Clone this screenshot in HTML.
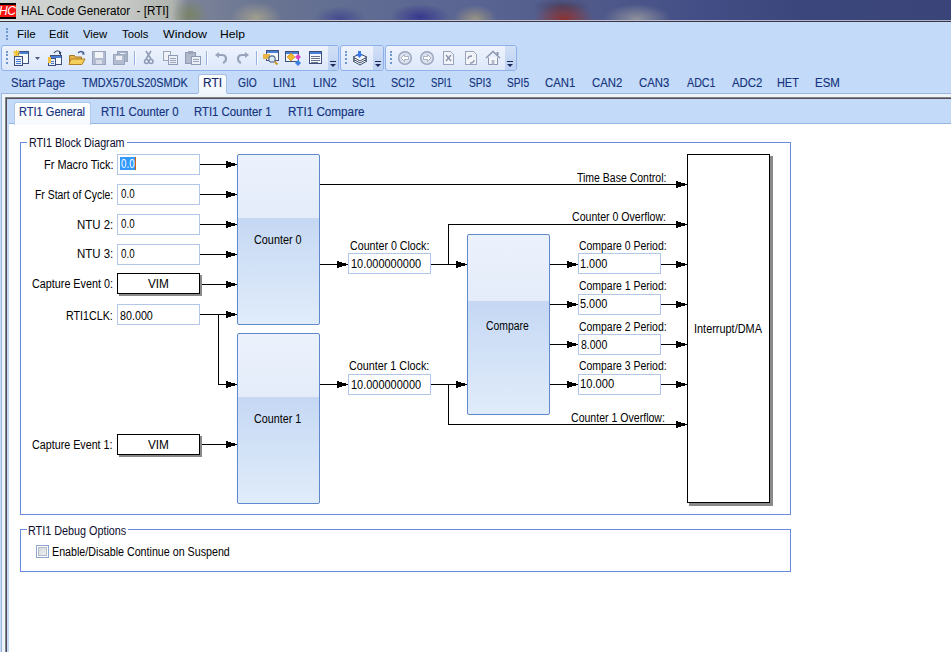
<!DOCTYPE html>
<html><head><meta charset="utf-8">
<style>
*{margin:0;padding:0;box-sizing:border-box}
html,body{width:951px;height:652px;overflow:hidden;background:#fff;font-family:"Liberation Sans",sans-serif}
.a{position:absolute}
.t{position:absolute;white-space:nowrap;transform-origin:0 0}
#title{left:0;top:0;width:951px;height:20px;
 background:
  radial-gradient(ellipse 18px 16px at 190px 15px, rgba(120,130,80,.7), rgba(120,130,80,0)),
  radial-gradient(ellipse 26px 16px at 256px 18px, rgba(190,180,140,.65), rgba(190,180,140,0)),
  radial-gradient(ellipse 26px 13px at 340px 19px, rgba(45,45,140,.55), rgba(45,45,140,0)),
  radial-gradient(ellipse 30px 13px at 420px 17px, rgba(40,36,140,.7), rgba(40,36,140,0)),
  radial-gradient(ellipse 22px 15px at 475px 20px, rgba(175,165,125,.75), rgba(175,165,125,0)),
  radial-gradient(ellipse 30px 16px at 564px 19px, rgba(145,45,38,.9), rgba(145,45,38,0)),
  radial-gradient(ellipse 30px 10px at 562px 7px, rgba(60,40,60,.5), rgba(60,40,60,0)),
  radial-gradient(ellipse 34px 15px at 637px 19px, rgba(170,170,165,.7), rgba(170,170,165,0)),
  linear-gradient(90deg,#d2d6d4 0px,#c8cbc8 120px,#b0b4ae 172px,#7c8498 188px,#6a7592 260px,#606c92 360px,#596492 480px,#4f598a 600px,#434e86 700px,#3b467c 800px,#3a4478 951px);}
#bar{left:0;top:22px;width:951px;height:630px;background:#c3dbf8}
.grip{width:2px;height:2px;background:#7196cc;position:absolute}
.tb{position:absolute;top:45px;height:26px;border:1px solid #8fb0ea;border-radius:3px;
 background:linear-gradient(#eef3fd,#e6eefc 45%,#dde8fb 100%)}
.ov{position:absolute;top:46px;height:24px;background:linear-gradient(#d2e0f6,#bcd0f2);border-radius:0 2px 2px 0}
.ova{position:absolute;width:0;height:0;border-left:3px solid transparent;border-right:3px solid transparent;border-top:3px solid #1a2a5a}
.ovl{position:absolute;width:6px;height:1px;background:#1a2a5a}
.sep{position:absolute;top:51px;width:1px;height:14px;background:#95b1e0;box-shadow:1px 0 0 #fff}
.gb{position:absolute;border:1px solid #6a8ade}
.tx{position:absolute;border:1px solid #b2c6e8;background:#fff;width:83px;height:21px}
.vim{position:absolute;background:#000}
.blk{position:absolute;border:1px solid #6088cc;border-radius:2px;width:83px;
 background:linear-gradient(#ecf2fc 0%,#e4ecfa 37%,#c6d7f4 37%,#cedff6 58%,#e0ecfa 100%)}
.ln{position:absolute;background:#000}
</style></head><body>
<div id="title" class="a"></div>
<div class="a" style="left:0;top:20px;width:951px;height:1px;background:linear-gradient(90deg,#e2e6e6,#c8ccd8 300px,#a8b2cc 951px)"></div>
<div class="a" style="left:0;top:21px;width:951px;height:1px;background:#3b3546"></div>
<!-- HC icon -->
<div class="a" style="left:0;top:3px;width:16px;height:16px;background:#000"></div>
<div class="a" style="left:0;top:5px;width:16px;height:12px;background:#f41414"></div>
<div class="a" style="left:-1px;top:4px;font-size:12px;line-height:14px;font-style:italic;color:#fff;letter-spacing:-0.5px;font-family:'Liberation Sans'">HC</div>

<div id="bar" class="a"></div>
<div class="grip" style="left:6px;top:28px"></div>
<div class="grip" style="left:6px;top:31px"></div>
<div class="grip" style="left:6px;top:35px"></div>
<div class="grip" style="left:6px;top:38px"></div>

<!-- toolbars -->
<div class="tb" style="left:1px;width:338px"></div>
<div class="ov" style="left:328px;width:10px"></div>
<div class="tb" style="left:340px;width:44px"></div>
<div class="ov" style="left:373px;width:10px"></div>
<div class="tb" style="left:385px;width:132px"></div>
<div class="ov" style="left:505px;width:11px"></div>
<div class="ovl" style="left:330px;top:61px"></div><div class="ova" style="left:330px;top:64px"></div>
<div class="ovl" style="left:375px;top:61px"></div><div class="ova" style="left:375px;top:64px"></div>
<div class="ovl" style="left:507px;top:61px"></div><div class="ova" style="left:507px;top:64px"></div>
<div class="grip" style="left:6px;top:51px"></div><div class="grip" style="left:6px;top:54px"></div><div class="grip" style="left:6px;top:58px"></div><div class="grip" style="left:6px;top:62px"></div>
<div class="grip" style="left:345px;top:51px"></div><div class="grip" style="left:345px;top:54px"></div><div class="grip" style="left:345px;top:58px"></div><div class="grip" style="left:345px;top:62px"></div>
<div class="grip" style="left:390px;top:51px"></div><div class="grip" style="left:390px;top:54px"></div><div class="grip" style="left:390px;top:58px"></div><div class="grip" style="left:390px;top:62px"></div>
<div class="sep" style="left:134px"></div>
<div class="sep" style="left:206px"></div>
<div class="sep" style="left:256px"></div>
<svg class="a" style="left:0;top:0" width="520" height="72" viewBox="0 0 520 72" shape-rendering="crispEdges">
<!-- 1 new project -->
<g>
 <rect x="18.5" y="51.5" width="10" height="12" fill="#f4f7fc" stroke="#3d4f7a"/>
 <rect x="19" y="52" width="9" height="2" fill="#4a7fd8"/>
 <path d="M13 53h7M16.5 50v7M14 51l5 5M19 51l-5 5" stroke="#f2c020" stroke-width="1.2" fill="none" shape-rendering="auto"/>
 <rect x="14.5" y="56.5" width="8" height="9" fill="#e8eef8" stroke="#3d4f7a"/>
 <path d="M16 59h5M16 61h5M16 63h5" stroke="#4a78d0"/>
</g>
<path d="M35 57h5l-2.5 3z" fill="#4a5a80" shape-rendering="auto"/>
<!-- 2 open project -->
<g>
 <rect x="50.5" y="55.5" width="11" height="9" fill="#f4f7fc" stroke="#3d4f7a"/>
 <rect x="51" y="56" width="10" height="2" fill="#4a7fd8"/>
 <path d="M54 53c2-3 5-3 7 0" stroke="#2d3f6a" stroke-width="1.2" fill="none" shape-rendering="auto"/>
 <path d="M59 52l3 2-2 1z" fill="#2d3f6a"/>
 <rect x="48.5" y="58.5" width="7" height="7" fill="#e8eef8" stroke="#3d4f7a"/>
 <rect x="47.5" y="57" width="3" height="6" fill="#f0c040"/>
 <path d="M51 61h3M51 63h3" stroke="#4a78d0"/>
</g>
<!-- 3 folder -->
<g shape-rendering="auto">
 <path d="M69.5 55.5h5l1 1.5h6v7.5h-12z" fill="#e8b448" stroke="#a0782a"/>
 <path d="M71 59h14l-3 5.5h-13z" fill="#f6cf5a" stroke="#b08028"/>
 <path d="M78 53c2-2 4-2 6 0" stroke="#3d5a8a" stroke-width="1.2" fill="none"/>
 <path d="M83 51.5l2 3-3 0z" fill="#3d5a8a"/>
</g>
<!-- 4 save (disabled) -->
<g>
 <rect x="92.5" y="51.5" width="13" height="13" fill="#b2bcd0" stroke="#98a4bc"/>
 <rect x="95" y="52" width="8" height="6" fill="#f2f4f8"/>
 <rect x="96" y="60" width="6" height="4" fill="#d8dce6"/>
</g>
<!-- 5 save all -->
<g>
 <rect x="117.5" y="51.5" width="10" height="10" fill="#aab4c8" stroke="#98a4bc"/><path d="M120 53h5" stroke="#eef2f8"/>
 <rect x="113.5" y="54.5" width="11" height="10" fill="#b2bcd0" stroke="#98a4bc"/>
 <rect x="116" y="56" width="6" height="4" fill="#eef0f6"/>
</g>
<!-- 6 cut -->
<g shape-rendering="auto" fill="none" stroke="#8f9ab4" stroke-width="1.5">
 <path d="M146 51l5 8M151 51l-5 8"/>
 <circle cx="146.5" cy="61.5" r="2"/><circle cx="151" cy="61.5" r="2"/>
</g>
<!-- 7 copy -->
<g>
 <rect x="163.5" y="51.5" width="7" height="9" fill="#f0f2f6" stroke="#9aa4ba"/>
 <rect x="168.5" y="55.5" width="9" height="9" fill="#eceff5" stroke="#8f9ab4"/>
 <path d="M170 58h6M170 60h6M170 62h6" stroke="#9aa4ba"/>
</g>
<!-- 8 paste -->
<g>
 <rect x="185.5" y="52.5" width="10" height="11" fill="#b0b8ca" stroke="#8f9ab4"/>
 <rect x="188" y="51" width="5" height="3" fill="#9aa4ba"/>
 <rect x="191.5" y="56.5" width="9" height="8" fill="#eceff5" stroke="#8f9ab4"/>
 <path d="M193 59h6M193 61h6" stroke="#9aa4ba"/>
</g>
<!-- 9 undo / redo -->
<g shape-rendering="auto" fill="none" stroke="#98a4bc" stroke-width="2.2">
 <path d="M217 55h5c3 0 4 2 4 4s-1 3-3 4"/>
 <path d="M247 55h-5c-3 0-4 2-4 4s1 3 3 4"/>
</g>
<path d="M215 55l4-3v6z" fill="#98a4bc" shape-rendering="auto"/>
<path d="M249 55l-4-3v6z" fill="#98a4bc" shape-rendering="auto"/>
<!-- 10 find -->
<g>
 <rect x="266.5" y="50.5" width="12" height="10" fill="#f4f7fc" stroke="#3d4f7a"/>
 <rect x="267" y="51" width="11" height="2" fill="#4a7fd8"/>
 <rect x="263" y="54" width="7" height="5" fill="#e8b448"/>
 <g shape-rendering="auto"><circle cx="272" cy="59" r="3.2" fill="#d8ecf8" stroke="#5a6a88" stroke-width="1.2"/>
 <path d="M274.5 61.5l3 3" stroke="#c89830" stroke-width="2"/></g>
</g>
<!-- 11 -->
<g>
 <rect x="285.5" y="51.5" width="13" height="10" fill="#f4f7fc" stroke="#3d4f7a"/>
 <rect x="286" y="52" width="12" height="2" fill="#4a7fd8"/>
 <g shape-rendering="auto">
 <path d="M287 57l4-4 4 4-4 4z" fill="#f0b830" stroke="#c08820" stroke-width=".6"/>
 <path d="M295 57l3-3 3 3-3 3z" fill="#e040c8"/>
 <path d="M295 63l3-3 3 3-3 3z" fill="#3a80e0"/>
 </g>
</g>
<!-- 12 list window -->
<g>
 <rect x="309.5" y="51.5" width="12" height="12" fill="#f4f7fc" stroke="#3d4f7a"/>
 <rect x="310" y="52" width="11" height="2" fill="#4a7fd8"/>
 <path d="M311 56h9M311 58h9M311 60h9M311 62h7" stroke="#6a7488"/>
</g>
<!-- 13 stack -->
<g shape-rendering="auto">
 <path d="M353 61l7-3 7 3-7 4z" fill="#fff" stroke="#3d4f6a"/>
 <path d="M353 59l7-3 7 3-7 4z" fill="#fff" stroke="#3d4f6a"/>
 <path d="M353 57l7-3 7 3-7 4z" fill="#f4f6fa" stroke="#3d4f6a"/>
 <path d="M358 51h3v3h2l-3.5 4-3.5-4h2z" fill="#3a7ae8"/>
</g>
<!-- 14 circle left / right -->
<g shape-rendering="auto">
 <circle cx="405" cy="58" r="6.3" fill="#dde3ee" stroke="#9aa4bc" stroke-width="1.4"/>
 <path d="M401 58l3.5-3.5v2h4v3h-4v2z" fill="#fff" stroke="#9aa4bc" stroke-width=".8"/>
 <circle cx="427" cy="58" r="6.3" fill="#dde3ee" stroke="#9aa4bc" stroke-width="1.4"/>
 <path d="M431 58l-3.5-3.5v2h-4v3h4v2z" fill="#fff" stroke="#9aa4bc" stroke-width=".8"/>
</g>
<!-- 15 doc x -->
<g>
 <path d="M443.5 51.5h7l3 3v10h-10z" fill="#f2f4f8" stroke="#9aa4bc"/>
 <path d="M446 55l5 6M451 55l-5 6" stroke="#8a94ac" stroke-width="1.4" shape-rendering="auto"/>
</g>
<!-- 16 doc refresh -->
<g>
 <path d="M465.5 51.5h8l3 3v10h-11z" fill="#f2f4f8" stroke="#9aa4bc"/>
 <path d="M468 59c0-2 2-3 4-3M474 60c0 2-2 3-4 3" stroke="#8a94ac" stroke-width="1.3" fill="none" shape-rendering="auto"/>
</g>
<!-- 17 home -->
<g shape-rendering="auto">
 <path d="M486 58l7-6.5 7 6.5" fill="none" stroke="#8a94ac" stroke-width="1.4"/>
 <path d="M488.5 57.5v7h9v-7" fill="#f4f6fa" stroke="#8a94ac"/>
 <rect x="491.5" y="60" width="3" height="4.5" fill="#b4bccc"/>
 <rect x="496.5" y="52" width="2" height="3" fill="#8a94ac"/>
</g>
</svg>


<!-- doc tab selected -->
<div class="a" style="left:198px;top:74px;width:29px;height:22px;background:linear-gradient(#fbfdff,#eef4fc);border:1px solid #a8c0e0;border-bottom:none;border-radius:3px 3px 0 0"></div>

<!-- content frame -->
<div class="a" style="left:1px;top:93px;width:950px;height:559px;background:#9cb6dc"></div>
<div class="a" style="left:2px;top:94px;width:949px;height:558px;background:#eef4fc"></div>
<div class="a" style="left:198px;top:93px;width:29px;height:4px;background:#eef4fc"></div>
<div class="a" style="left:5px;top:97px;width:946px;height:555px;background:#7d877f"></div>
<div class="a" style="left:6px;top:98px;width:945px;height:554px;background:#584a5a"></div>
<div class="a" style="left:7px;top:99px;width:944px;height:553px;background:#c3dbf8"></div>
<div class="a" style="left:9px;top:123px;width:942px;height:1px;background:#98b6e2"></div>
<div class="a" style="left:9px;top:124px;width:942px;height:528px;background:#fff"></div>
<div class="a" style="left:14px;top:102px;width:77px;height:23px;background:linear-gradient(#ffffff,#f6f9fe);border:1px solid #b0c8ea;border-bottom:none;border-radius:3px 3px 0 0"></div>

<!-- group boxes -->
<div class="gb" style="left:20px;top:142px;width:771px;height:373px"></div>
<div class="a" style="left:27px;top:140px;width:100px;height:4px;background:#fff"></div>
<div class="gb" style="left:20px;top:529px;width:771px;height:43px"></div>
<div class="a" style="left:27px;top:527px;width:101px;height:4px;background:#fff"></div>
<!-- checkbox -->
<div class="a" style="left:36px;top:545px;width:13px;height:13px;border:1px solid #8fa4d0;background:#fff"></div>
<div class="a" style="left:38px;top:547px;width:9px;height:9px;border:1px solid #b4bcc8;background:linear-gradient(135deg,#d4d8d8,#eef0f2)"></div>

<div class="tx" style="left:117px;top:154px;"></div>
<div class="tx" style="left:117px;top:184px;"></div>
<div class="tx" style="left:117px;top:214px;"></div>
<div class="tx" style="left:117px;top:244px;"></div>
<div class="tx" style="left:117px;top:304px;"></div>
<div class="a" style="left:119px;top:275px;width:83px;height:21px;background:#8a8a8a"></div>
<div class="a" style="left:117px;top:273px;width:83px;height:21px;background:#000"></div>
<div class="a" style="left:118px;top:274px;width:81px;height:19px;background:#fff"></div>
<div class="a" style="left:119px;top:436px;width:83px;height:21px;background:#8a8a8a"></div>
<div class="a" style="left:117px;top:434px;width:83px;height:21px;background:#000"></div>
<div class="a" style="left:118px;top:435px;width:81px;height:19px;background:#fff"></div>
<div class="a" style="left:120px;top:157px;width:15px;height:13px;background:#3399ff"></div>
<div class="a" style="left:135px;top:157px;width:1px;height:13px;background:#d06010"></div>
<div class="blk" style="left:237px;top:154px;height:171px;"></div>
<div class="blk" style="left:237px;top:333px;height:171px;"></div>
<div class="blk" style="left:467px;top:234px;height:181px;"></div>
<div class="tx" style="left:348px;top:253px;"></div>
<div class="tx" style="left:348px;top:374px;"></div>
<div class="tx" style="left:578px;top:253px;"></div>
<div class="tx" style="left:578px;top:294px;"></div>
<div class="tx" style="left:578px;top:334px;"></div>
<div class="tx" style="left:578px;top:374px;"></div>
<div class="a" style="left:689px;top:156px;width:84px;height:350px;background:#8a8a8a"></div>
<div class="a" style="left:687px;top:154px;width:83px;height:349px;background:#000"></div>
<div class="a" style="left:688px;top:155px;width:81px;height:347px;background:#fff"></div>
<div class="ln" style="left:200px;top:164px;width:37px;height:1px;"></div>
<div class="ln" style="left:226px;top:161px;width:2px;height:7px;"></div>
<div class="ln" style="left:228px;top:162px;width:3px;height:5px;"></div>
<div class="ln" style="left:231px;top:163px;width:4px;height:3px;"></div>
<div class="ln" style="left:200px;top:194px;width:37px;height:1px;"></div>
<div class="ln" style="left:226px;top:191px;width:2px;height:7px;"></div>
<div class="ln" style="left:228px;top:192px;width:3px;height:5px;"></div>
<div class="ln" style="left:231px;top:193px;width:4px;height:3px;"></div>
<div class="ln" style="left:200px;top:224px;width:37px;height:1px;"></div>
<div class="ln" style="left:226px;top:221px;width:2px;height:7px;"></div>
<div class="ln" style="left:228px;top:222px;width:3px;height:5px;"></div>
<div class="ln" style="left:231px;top:223px;width:4px;height:3px;"></div>
<div class="ln" style="left:200px;top:254px;width:37px;height:1px;"></div>
<div class="ln" style="left:226px;top:251px;width:2px;height:7px;"></div>
<div class="ln" style="left:228px;top:252px;width:3px;height:5px;"></div>
<div class="ln" style="left:231px;top:253px;width:4px;height:3px;"></div>
<div class="ln" style="left:202px;top:284px;width:35px;height:1px;"></div>
<div class="ln" style="left:226px;top:281px;width:2px;height:7px;"></div>
<div class="ln" style="left:228px;top:282px;width:3px;height:5px;"></div>
<div class="ln" style="left:231px;top:283px;width:4px;height:3px;"></div>
<div class="ln" style="left:200px;top:314px;width:37px;height:1px;"></div>
<div class="ln" style="left:226px;top:311px;width:2px;height:7px;"></div>
<div class="ln" style="left:228px;top:312px;width:3px;height:5px;"></div>
<div class="ln" style="left:231px;top:313px;width:4px;height:3px;"></div>
<div class="ln" style="left:218px;top:314px;width:1px;height:71px;"></div>
<div class="ln" style="left:218px;top:384px;width:19px;height:1px;"></div>
<div class="ln" style="left:226px;top:381px;width:2px;height:7px;"></div>
<div class="ln" style="left:228px;top:382px;width:3px;height:5px;"></div>
<div class="ln" style="left:231px;top:383px;width:4px;height:3px;"></div>
<div class="ln" style="left:202px;top:444px;width:35px;height:1px;"></div>
<div class="ln" style="left:226px;top:441px;width:2px;height:7px;"></div>
<div class="ln" style="left:228px;top:442px;width:3px;height:5px;"></div>
<div class="ln" style="left:231px;top:443px;width:4px;height:3px;"></div>
<div class="ln" style="left:320px;top:184px;width:367px;height:1px;"></div>
<div class="ln" style="left:676px;top:181px;width:2px;height:7px;"></div>
<div class="ln" style="left:678px;top:182px;width:3px;height:5px;"></div>
<div class="ln" style="left:681px;top:183px;width:4px;height:3px;"></div>
<div class="ln" style="left:320px;top:264px;width:28px;height:1px;"></div>
<div class="ln" style="left:337px;top:261px;width:2px;height:7px;"></div>
<div class="ln" style="left:339px;top:262px;width:3px;height:5px;"></div>
<div class="ln" style="left:342px;top:263px;width:4px;height:3px;"></div>
<div class="ln" style="left:431px;top:264px;width:36px;height:1px;"></div>
<div class="ln" style="left:456px;top:261px;width:2px;height:7px;"></div>
<div class="ln" style="left:458px;top:262px;width:3px;height:5px;"></div>
<div class="ln" style="left:461px;top:263px;width:4px;height:3px;"></div>
<div class="ln" style="left:448px;top:224px;width:1px;height:41px;"></div>
<div class="ln" style="left:448px;top:224px;width:239px;height:1px;"></div>
<div class="ln" style="left:676px;top:221px;width:2px;height:7px;"></div>
<div class="ln" style="left:678px;top:222px;width:3px;height:5px;"></div>
<div class="ln" style="left:681px;top:223px;width:4px;height:3px;"></div>
<div class="ln" style="left:320px;top:384px;width:28px;height:1px;"></div>
<div class="ln" style="left:337px;top:381px;width:2px;height:7px;"></div>
<div class="ln" style="left:339px;top:382px;width:3px;height:5px;"></div>
<div class="ln" style="left:342px;top:383px;width:4px;height:3px;"></div>
<div class="ln" style="left:431px;top:384px;width:36px;height:1px;"></div>
<div class="ln" style="left:456px;top:381px;width:2px;height:7px;"></div>
<div class="ln" style="left:458px;top:382px;width:3px;height:5px;"></div>
<div class="ln" style="left:461px;top:383px;width:4px;height:3px;"></div>
<div class="ln" style="left:448px;top:384px;width:1px;height:41px;"></div>
<div class="ln" style="left:448px;top:424px;width:239px;height:1px;"></div>
<div class="ln" style="left:676px;top:421px;width:2px;height:7px;"></div>
<div class="ln" style="left:678px;top:422px;width:3px;height:5px;"></div>
<div class="ln" style="left:681px;top:423px;width:4px;height:3px;"></div>
<div class="ln" style="left:550px;top:264px;width:28px;height:1px;"></div>
<div class="ln" style="left:567px;top:261px;width:2px;height:7px;"></div>
<div class="ln" style="left:569px;top:262px;width:3px;height:5px;"></div>
<div class="ln" style="left:572px;top:263px;width:4px;height:3px;"></div>
<div class="ln" style="left:661px;top:264px;width:26px;height:1px;"></div>
<div class="ln" style="left:676px;top:261px;width:2px;height:7px;"></div>
<div class="ln" style="left:678px;top:262px;width:3px;height:5px;"></div>
<div class="ln" style="left:681px;top:263px;width:4px;height:3px;"></div>
<div class="ln" style="left:550px;top:304px;width:28px;height:1px;"></div>
<div class="ln" style="left:567px;top:301px;width:2px;height:7px;"></div>
<div class="ln" style="left:569px;top:302px;width:3px;height:5px;"></div>
<div class="ln" style="left:572px;top:303px;width:4px;height:3px;"></div>
<div class="ln" style="left:661px;top:304px;width:26px;height:1px;"></div>
<div class="ln" style="left:676px;top:301px;width:2px;height:7px;"></div>
<div class="ln" style="left:678px;top:302px;width:3px;height:5px;"></div>
<div class="ln" style="left:681px;top:303px;width:4px;height:3px;"></div>
<div class="ln" style="left:550px;top:344px;width:28px;height:1px;"></div>
<div class="ln" style="left:567px;top:341px;width:2px;height:7px;"></div>
<div class="ln" style="left:569px;top:342px;width:3px;height:5px;"></div>
<div class="ln" style="left:572px;top:343px;width:4px;height:3px;"></div>
<div class="ln" style="left:661px;top:344px;width:26px;height:1px;"></div>
<div class="ln" style="left:676px;top:341px;width:2px;height:7px;"></div>
<div class="ln" style="left:678px;top:342px;width:3px;height:5px;"></div>
<div class="ln" style="left:681px;top:343px;width:4px;height:3px;"></div>
<div class="ln" style="left:550px;top:384px;width:28px;height:1px;"></div>
<div class="ln" style="left:567px;top:381px;width:2px;height:7px;"></div>
<div class="ln" style="left:569px;top:382px;width:3px;height:5px;"></div>
<div class="ln" style="left:572px;top:383px;width:4px;height:3px;"></div>
<div class="ln" style="left:661px;top:384px;width:26px;height:1px;"></div>
<div class="ln" style="left:676px;top:381px;width:2px;height:7px;"></div>
<div class="ln" style="left:678px;top:382px;width:3px;height:5px;"></div>
<div class="ln" style="left:681px;top:383px;width:4px;height:3px;"></div>
<div class="t" style="left:21.23px;top:3px;font-size:12px;line-height:16px;color:#000;transform:scaleX(0.9720);">HAL Code Generator&nbsp; - [RTI]</div>
<div class="t" style="left:16.74px;top:27px;font-size:11px;line-height:15px;color:#000;transform:scaleX(1.0563);">File</div>
<div class="t" style="left:48.98px;top:27px;font-size:11px;line-height:15px;color:#000;transform:scaleX(1.0167);">Edit</div>
<div class="t" style="left:83.40px;top:27px;font-size:11px;line-height:15px;color:#000;transform:scaleX(1.0250);">View</div>
<div class="t" style="left:121.60px;top:27px;font-size:11px;line-height:15px;color:#000;transform:scaleX(1.0308);">Tools</div>
<div class="t" style="left:163.20px;top:27px;font-size:11px;line-height:15px;color:#000;transform:scaleX(1.1231);">Window</div>
<div class="t" style="left:219.80px;top:27px;font-size:11px;line-height:15px;color:#000;transform:scaleX(1.1048);">Help</div>
<div class="t" style="left:11.45px;top:75px;font-size:12px;line-height:16px;color:#15337e;transform:scaleX(0.9545);-webkit-text-stroke:0.15px #15337e;">Start Page</div>
<div class="t" style="left:82.00px;top:75px;font-size:12px;line-height:16px;color:#15337e;transform:scaleX(0.9060);-webkit-text-stroke:0.15px #15337e;">TMDX570LS20SMDK</div>
<div class="t" style="left:203.41px;top:75px;font-size:12px;line-height:16px;color:#15286e;transform:scaleX(0.9941);-webkit-text-stroke:0.15px #15286e;">RTI</div>
<div class="t" style="left:237.50px;top:75px;font-size:12px;line-height:16px;color:#15337e;transform:scaleX(0.8545);-webkit-text-stroke:0.15px #15337e;">GIO</div>
<div class="t" style="left:272.89px;top:75px;font-size:12px;line-height:16px;color:#15337e;transform:scaleX(0.9125);-webkit-text-stroke:0.15px #15337e;">LIN1</div>
<div class="t" style="left:312.56px;top:75px;font-size:12px;line-height:16px;color:#15337e;transform:scaleX(0.9375);-webkit-text-stroke:0.15px #15337e;">LIN2</div>
<div class="t" style="left:352.13px;top:75px;font-size:12px;line-height:16px;color:#15337e;transform:scaleX(0.8720);-webkit-text-stroke:0.15px #15337e;">SCI1</div>
<div class="t" style="left:391.41px;top:75px;font-size:12px;line-height:16px;color:#15337e;transform:scaleX(0.8880);-webkit-text-stroke:0.15px #15337e;">SCI2</div>
<div class="t" style="left:431.20px;top:75px;font-size:12px;line-height:16px;color:#15337e;transform:scaleX(0.8000);-webkit-text-stroke:0.15px #15337e;">SPI1</div>
<div class="t" style="left:468.85px;top:75px;font-size:12px;line-height:16px;color:#15337e;transform:scaleX(0.8480);-webkit-text-stroke:0.15px #15337e;">SPI3</div>
<div class="t" style="left:506.85px;top:75px;font-size:12px;line-height:16px;color:#15337e;transform:scaleX(0.8480);-webkit-text-stroke:0.15px #15337e;">SPI5</div>
<div class="t" style="left:545.10px;top:75px;font-size:12px;line-height:16px;color:#15337e;transform:scaleX(0.9469);-webkit-text-stroke:0.15px #15337e;">CAN1</div>
<div class="t" style="left:592.20px;top:75px;font-size:12px;line-height:16px;color:#15337e;transform:scaleX(0.9469);-webkit-text-stroke:0.15px #15337e;">CAN2</div>
<div class="t" style="left:639.40px;top:75px;font-size:12px;line-height:16px;color:#15337e;transform:scaleX(0.9438);-webkit-text-stroke:0.15px #15337e;">CAN3</div>
<div class="t" style="left:686.50px;top:75px;font-size:12px;line-height:16px;color:#15337e;transform:scaleX(0.8906);-webkit-text-stroke:0.15px #15337e;">ADC1</div>
<div class="t" style="left:731.90px;top:75px;font-size:12px;line-height:16px;color:#15337e;transform:scaleX(0.9469);-webkit-text-stroke:0.15px #15337e;">ADC2</div>
<div class="t" style="left:777.39px;top:75px;font-size:12px;line-height:16px;color:#15337e;transform:scaleX(0.9087);-webkit-text-stroke:0.15px #15337e;">HET</div>
<div class="t" style="left:815.05px;top:75px;font-size:12px;line-height:16px;color:#15337e;transform:scaleX(0.9542);-webkit-text-stroke:0.15px #15337e;">ESM</div>
<div class="t" style="left:18.98px;top:104px;font-size:12px;line-height:16px;color:#15337e;transform:scaleX(0.9200);-webkit-text-stroke:0.15px #15337e;">RTI1 General</div>
<div class="t" style="left:100.95px;top:104px;font-size:12px;line-height:16px;color:#15337e;transform:scaleX(0.9469);-webkit-text-stroke:0.15px #15337e;">RTI1 Counter 0</div>
<div class="t" style="left:194.05px;top:104px;font-size:12px;line-height:16px;color:#15337e;transform:scaleX(0.9469);-webkit-text-stroke:0.15px #15337e;">RTI1 Counter 1</div>
<div class="t" style="left:287.52px;top:104px;font-size:12px;line-height:16px;color:#15337e;transform:scaleX(0.9753);-webkit-text-stroke:0.15px #15337e;">RTI1 Compare</div>
<div class="t" style="left:28.81px;top:135px;font-size:12px;line-height:16px;color:#0c0c30;transform:scaleX(0.8915);">RTI1 Block Diagram</div>
<div class="t" style="left:28.10px;top:523px;font-size:12px;line-height:16px;color:#0c0c30;transform:scaleX(0.9000);">RTI1 Debug Options</div>
<div class="t" style="left:51.61px;top:544px;font-size:12px;line-height:16px;color:#000;transform:scaleX(0.8914);">Enable/Disable Continue on Suspend</div>
<div class="t" style="left:43.79px;top:157px;font-size:12px;line-height:16px;color:#000;transform:scaleX(0.9135);">Fr Macro Tick:</div>
<div class="t" style="left:35.03px;top:187px;font-size:12px;line-height:16px;color:#000;transform:scaleX(0.8682);">Fr Start of Cycle:</div>
<div class="t" style="left:76.55px;top:217px;font-size:12px;line-height:16px;color:#000;transform:scaleX(0.9528);">NTU 2:</div>
<div class="t" style="left:76.55px;top:246px;font-size:12px;line-height:16px;color:#000;transform:scaleX(0.9528);">NTU 3:</div>
<div class="t" style="left:31.80px;top:276px;font-size:12px;line-height:16px;color:#000;transform:scaleX(0.8989);">Capture Event 0:</div>
<div class="t" style="left:65.81px;top:308px;font-size:12px;line-height:16px;color:#000;transform:scaleX(0.8922);">RTI1CLK:</div>
<div class="t" style="left:31.81px;top:437px;font-size:12px;line-height:16px;color:#000;transform:scaleX(0.8943);">Capture Event 1:</div>
<div class="t" style="left:121.00px;top:156px;font-size:12px;line-height:16px;color:#fff;transform:scaleX(0.8125);">0.0</div>
<div class="t" style="left:121.00px;top:186px;font-size:12px;line-height:16px;color:#000;transform:scaleX(0.8125);">0.0</div>
<div class="t" style="left:121.00px;top:216px;font-size:12px;line-height:16px;color:#000;transform:scaleX(0.8125);">0.0</div>
<div class="t" style="left:121.00px;top:246px;font-size:12px;line-height:16px;color:#000;transform:scaleX(0.8125);">0.0</div>
<div class="t" style="left:120.40px;top:308px;font-size:12px;line-height:16px;color:#000;transform:scaleX(0.8944);">80.000</div>
<div class="t" style="left:148.40px;top:276px;font-size:12px;line-height:16px;color:#000;transform:scaleX(0.9800);">VIM</div>
<div class="t" style="left:148.40px;top:437px;font-size:12px;line-height:16px;color:#000;transform:scaleX(0.9800);">VIM</div>
<div class="t" style="left:253.50px;top:232px;font-size:12px;line-height:16px;color:#000;transform:scaleX(0.9039);">Counter 0</div>
<div class="t" style="left:253.70px;top:411px;font-size:12px;line-height:16px;color:#000;transform:scaleX(0.8961);">Counter 1</div>
<div class="t" style="left:485.64px;top:318px;font-size:12px;line-height:16px;color:#000;transform:scaleX(0.8646);">Compare</div>
<div class="t" style="left:693.79px;top:321px;font-size:12px;line-height:16px;color:#000;transform:scaleX(0.9095);">Interrupt/DMA</div>
<div class="t" style="left:349.81px;top:238px;font-size:12px;line-height:16px;color:#000;transform:scaleX(0.8885);">Counter 0 Clock:</div>
<div class="t" style="left:350.79px;top:256px;font-size:12px;line-height:16px;color:#000;transform:scaleX(0.9133);">10.000000000</div>
<div class="t" style="left:349.40px;top:358px;font-size:12px;line-height:16px;color:#000;transform:scaleX(0.8989);">Counter 1 Clock:</div>
<div class="t" style="left:350.79px;top:377px;font-size:12px;line-height:16px;color:#000;transform:scaleX(0.9133);">10.000000000</div>
<div class="t" style="left:577.10px;top:170px;font-size:12px;line-height:16px;color:#000;transform:scaleX(0.8743);">Time Base Control:</div>
<div class="t" style="left:572.02px;top:209px;font-size:12px;line-height:16px;color:#000;transform:scaleX(0.8810);">Counter 0 Overflow:</div>
<div class="t" style="left:578.53px;top:238px;font-size:12px;line-height:16px;color:#000;transform:scaleX(0.8697);">Compare 0 Period:</div>
<div class="t" style="left:580.09px;top:256px;font-size:12px;line-height:16px;color:#000;transform:scaleX(0.9069);">1.000</div>
<div class="t" style="left:578.53px;top:278px;font-size:12px;line-height:16px;color:#000;transform:scaleX(0.8697);">Compare 1 Period:</div>
<div class="t" style="left:580.09px;top:296px;font-size:12px;line-height:16px;color:#000;transform:scaleX(0.9069);">5.000</div>
<div class="t" style="left:578.53px;top:319px;font-size:12px;line-height:16px;color:#000;transform:scaleX(0.8697);">Compare 2 Period:</div>
<div class="t" style="left:581.00px;top:337px;font-size:12px;line-height:16px;color:#000;transform:scaleX(0.8767);">8.000</div>
<div class="t" style="left:578.53px;top:358px;font-size:12px;line-height:16px;color:#000;transform:scaleX(0.8697);">Compare 3 Period:</div>
<div class="t" style="left:580.07px;top:376px;font-size:12px;line-height:16px;color:#000;transform:scaleX(0.9314);">10.000</div>
<div class="t" style="left:570.92px;top:410px;font-size:12px;line-height:16px;color:#000;transform:scaleX(0.8800);">Counter 1 Overflow:</div>
</body></html>
